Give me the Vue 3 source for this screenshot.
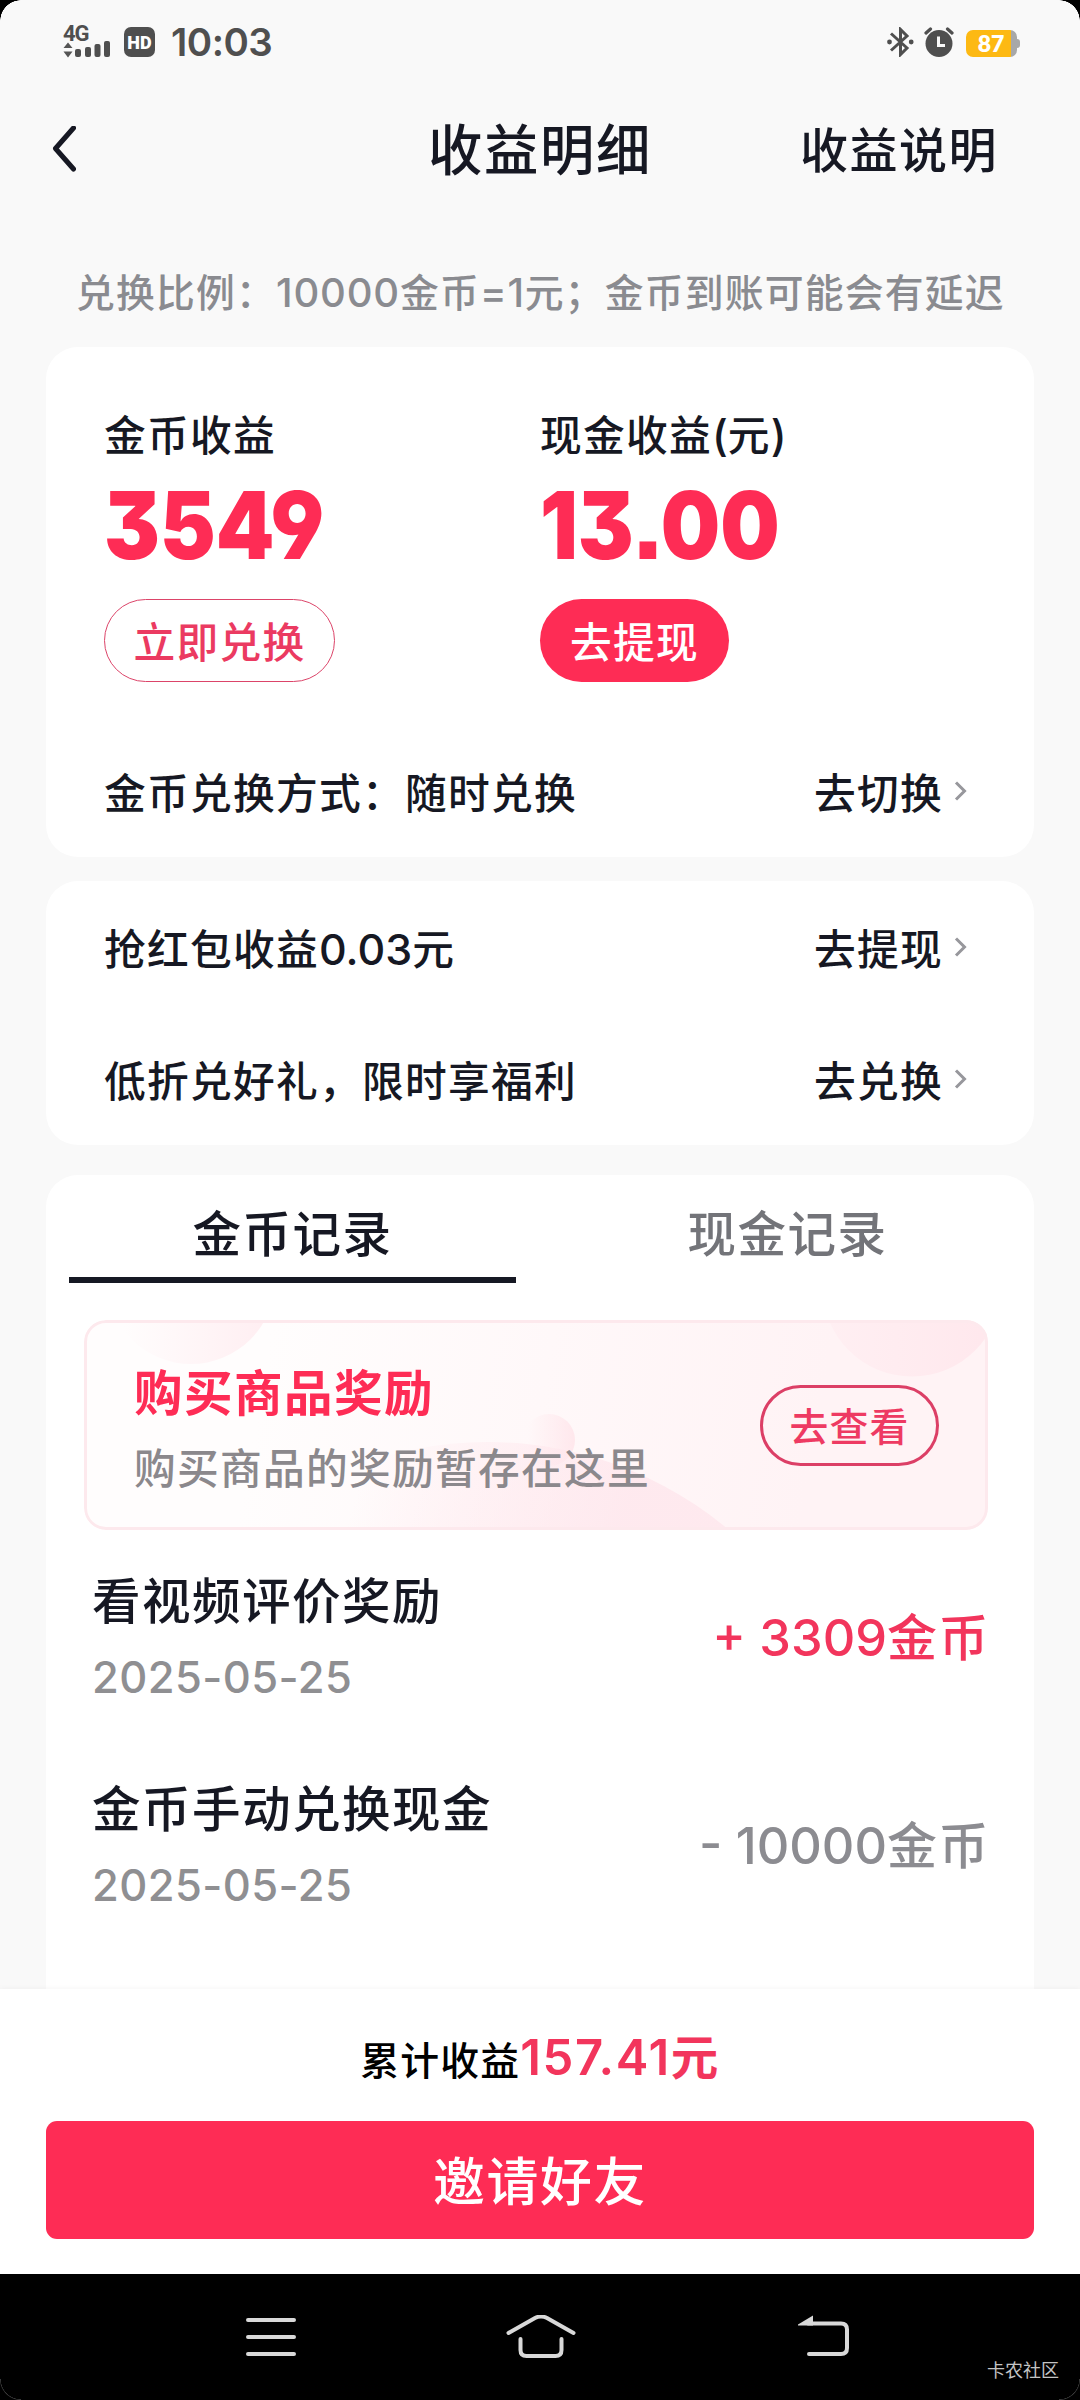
<script setup>
import { h } from 'vue'

const exchangeRows = [
  { label: '抢红包收益0.03元', action: '去提现' },
  { label: '低折兑好礼，限时享福利', action: '去兑换' },
]

const records = [
  { title: '看视频评价奖励', date: '2025-05-25', amount: '+ 3309金币', gain: true },
  { title: '金币手动兑换现金', date: '2025-05-25', amount: '- 10000金币', gain: false },
]

// Splits mixed text into Latin and Han runs so that each gets its own sizing.
const Txt = (props) =>
  h(
    'span',
    { class: 'txt' },
    props.v
      .match(/[\x00-\x7f]+|[^\x00-\x7f]+/g)
      .map((run) => h('span', { class: /^[\x00-\x7f]/.test(run) ? 'lat' : 'han' }, run)),
  )
Txt.props = ['v']
</script>

<template>
  <div class="screen">
    <header class="status">
      <div class="status-left">
        <div class="signal">
          <span class="net">4G</span>
          <svg width="48" height="18" viewBox="0 0 48 18">
            <path d="M5 2.500 9.500 8H.5zM5 17.500.5 11.500H9.500z" fill="#555" />
            <g fill="#4f4f4f">
              <rect x="12" y="9" width="6" height="8" rx="2" />
              <rect x="22" y="7" width="6" height="10" rx="2" />
              <rect x="31.500" y="4" width="6" height="13" rx="2" />
              <rect x="41" y="1" width="6" height="16" rx="2" />
            </g>
          </svg>
        </div>
        <span class="hd">HD</span>
        <span class="clock">10:03</span>
      </div>
      <div class="status-right">
        <svg width="27" height="30" viewBox="0 0 27 30" fill="none" stroke="#4f4f4f" stroke-width="3">
          <path d="M4 6.500 20 21l-6.500 6.500V2.500L20 9 4 23.500" />
          <circle cx="2.500" cy="15" r="2.400" fill="#4f4f4f" stroke="none" />
          <circle cx="24.200" cy="15" r="2.400" fill="#4f4f4f" stroke="none" />
        </svg>
        <svg class="alarm" width="30" height="30" viewBox="0 0 30 30">
          <circle cx="15" cy="16.500" r="13.500" fill="#4f4f4f" />
          <path d="M2 6 6.500 2M28 6 23.500 2" stroke="#4f4f4f" stroke-width="3.200" stroke-linecap="round" />
          <path d="M14.500 9.500v9h6.500" fill="none" stroke="#f9f9f9" stroke-width="3" />
        </svg>
        <div class="battery"><span class="level">87</span></div>
      </div>
    </header>

    <nav class="topbar">
      <svg class="back" width="24" height="46" viewBox="0 0 24 46">
        <path d="M21.500 2 3.500 22.500 21.500 43" fill="none" stroke="#161823" stroke-width="5" stroke-linecap="round" stroke-linejoin="round" />
      </svg>
      <h1><Txt v="收益明细" /></h1>
      <span class="explain"><Txt v="收益说明" /></span>
    </nav>

    <main>
      <p class="ratio"><Txt v="兑换比例：10000金币=1元；金币到账可能会有延迟" /></p>

      <section class="card balance">
        <div class="totals">
          <div class="total">
            <div class="label"><Txt v="金币收益" /></div>
            <div class="number">3549</div>
            <button class="pill outline"><Txt v="立即兑换" /></button>
          </div>
          <div class="total">
            <div class="label"><Txt v="现金收益(元)" /></div>
            <div class="number">13.00</div>
            <button class="pill solid"><Txt v="去提现" /></button>
          </div>
        </div>
        <div class="row mode">
          <Txt v="金币兑换方式：随时兑换" />
          <span class="go">
            <Txt v="去切换" />
            <svg width="13" height="22" viewBox="0 0 13 22"><path d="M2 2.500 10.500 11 2 19.500" fill="none" stroke="#97979c" stroke-width="3" /></svg>
          </span>
        </div>
      </section>

      <section class="card links">
        <div v-for="r in exchangeRows" :key="r.label" class="row">
          <Txt :v="r.label" />
          <span class="go">
            <Txt :v="r.action" />
            <svg width="13" height="22" viewBox="0 0 13 22"><path d="M2 2.500 10.500 11 2 19.500" fill="none" stroke="#97979c" stroke-width="3" /></svg>
          </span>
        </div>
      </section>

      <section class="card history">
        <div class="tabs">
          <div class="tab active"><Txt v="金币记录" /></div>
          <div class="tab"><Txt v="现金记录" /></div>
        </div>

        <div class="banner">
          <svg class="bubbles" viewBox="84 1320 904 210" width="904" height="210">
            <defs>
              <linearGradient id="b1" x1="0" x2="1"><stop offset=".1" stop-color="#ffe3e9" stop-opacity="0" /><stop offset="1" stop-color="#ffe3e9" stop-opacity=".6" /></linearGradient>
              <linearGradient id="b2" x1="0" x2="1"><stop offset="0" stop-color="#ffe6ec" stop-opacity=".3" /><stop offset="1" stop-color="#ffe4ea" stop-opacity=".8" /></linearGradient>
              <linearGradient id="b3" gradientUnits="userSpaceOnUse" x1="370" x2="620" y1="1450" y2="1530"><stop offset="0" stop-color="#ffe4ea" stop-opacity="0" /><stop offset="1" stop-color="#fee7ed" stop-opacity=".85" /></linearGradient>
              <linearGradient id="b4" x1="0" x2="1" y1="0" y2="0"><stop offset=".1" stop-color="#ffdfe6" stop-opacity="0" /><stop offset="1" stop-color="#ffdfe6" stop-opacity=".65" /></linearGradient>
            </defs>
            <circle cx="191" cy="1280" r="84" fill="url(#b1)" />
            <circle cx="912" cy="1287" r="89.500" fill="url(#b2)" />
            <circle cx="549" cy="1440" r="26" fill="url(#b4)" />
            <circle cx="488" cy="1816" r="374" fill="url(#b3)" />
          </svg>
          <div class="promo">
            <div class="promo-title"><Txt v="购买商品奖励" /></div>
            <div class="promo-sub"><Txt v="购买商品的奖励暂存在这里" /></div>
          </div>
          <button class="view"><Txt v="去查看" /></button>
        </div>

        <div v-for="r in records" :key="r.title" class="record">
          <div>
            <div class="record-title"><Txt :v="r.title" /></div>
            <div class="date">{{ r.date }}</div>
          </div>
          <div class="amount" :class="{ gain: r.gain }"><Txt :v="r.amount" /></div>
        </div>
      </section>
    </main>

    <footer class="bottom">
      <div class="sum"><Txt v="累计收益" /><span class="sum-value"><Txt v="157.41元" /></span></div>
      <button class="invite"><Txt v="邀请好友" /></button>
    </footer>

    <div class="sysnav">
      <svg width="50" height="44" viewBox="0 0 50 44" stroke="#d9d9d9" stroke-width="4" stroke-linecap="round">
        <path d="M2 5h46M2 22h46M2 39h46" />
      </svg>
      <svg class="home" width="70" height="44" viewBox="0 0 70 44" fill="none" stroke="#d9d9d9" stroke-width="4" stroke-linecap="round">
        <path d="M2.500 18 29 3q6-3 12 0l26.500 15" />
        <path d="M14.500 24v11q0 6 6 6h29q6 0 6-6V24" />
      </svg>
      <svg class="return" width="52" height="44" viewBox="0 0 52 44" fill="none" stroke="#d9d9d9" stroke-width="4">
        <path d="M10 8.500h33q6 0 6 6V33q0 6-6 6H11" stroke-linecap="round" />
        <path d="M0 9.500 15 .5v10H0z" fill="#d9d9d9" stroke="none" />
      </svg>
      <span class="watermark">卡农社区</span>
    </div>
    <i class="corner tl"></i><i class="corner tr"></i>
    <i class="corner bl"></i><i class="corner br"></i>
  </div>
</template>

<style>
body {
  margin: 0;
  background: #000;
}
.txt {
  white-space: pre;
}
.han {
  font-size: 0.97em;
  letter-spacing: 0.031em;
}
.ratio .lat {
  letter-spacing: 0.8px;
}
.amount .lat {
  font-size: 0.98em;
}
.sum-value .lat {
  letter-spacing: 1.6px;
}
</style>

<style scoped>
.screen {
  position: relative;
  width: 1080px;
  height: 2400px;
  overflow: hidden;
  display: flex;
  flex-direction: column;
  background: #f9f9f9;
  color: #161823;
  font-family: Inter, 'Noto Sans CJK SC', sans-serif;
  font-weight: 500;
  font-size: 43px;
}
button {
  font: inherit;
  padding: 0;
  margin: 0;
  border: 0;
  background: none;
  box-sizing: border-box;
  display: flex;
  align-items: center;
  justify-content: center;
}
h1,
p {
  margin: 0;
  font-weight: inherit;
}
.status {
  height: 84px;
  flex: none;
  display: flex;
  justify-content: space-between;
  box-sizing: border-box;
  padding: 0 60px 0 63px;
  color: #4f4f4f;
}
.status-left,
.status-right {
  display: flex;
  height: 84px;
  align-items: center;
}
.signal {
  display: flex;
  flex-direction: column;
  height: 36px;
  width: 48px;
  margin-top: 2px;
}
.net {
  font: 700 22px/18px Roboto, sans-serif;
  height: 18px;
  letter-spacing: -1px;
}
.signal svg {
  flex: none;
  margin-top: -3px;
}
.hd {
  width: 31px;
  height: 30px;
  margin-left: 13px;
  border-radius: 7px;
  background: #4f4f4f;
  color: #fff;
  font: 900 18px/31px Roboto, sans-serif;
  text-align: center;
}
.clock {
  margin-left: 16px;
  font: 600 38.500px/56px Inter, sans-serif;
  letter-spacing: -0.5px;
}
.alarm {
  margin-left: 10px;
}
.battery {
  position: relative;
  margin: 2px 3px 0 12px;
  width: 51px;
  height: 27px;
  border-radius: 7px;
  background: linear-gradient(90deg, #fdb913 45px, #a8a8a8 45px);
  color: #fff;
}
.battery::after {
  content: '';
  position: absolute;
  left: 51px;
  top: 9px;
  width: 3px;
  height: 9px;
  border-radius: 0 3px 3px 0;
  background: #a8a8a8;
}
.level {
  display: block;
  width: 50px;
  text-align: center;
  font: 800 23px/27px Lato, sans-serif;
}
.topbar {
  flex: none;
  height: 130px;
  display: grid;
  grid-template-columns: 380px 320px 380px;
  align-items: center;
}
.back {
  margin-left: 52px;
}
h1 {
  text-align: center;
  font-size: 56px;
  padding-bottom: 5px;
}
.explain {
  justify-self: end;
  margin-right: 82px;
  padding-bottom: 4px;
  font-size: 49.500px;
}
main {
  flex: 1;
  min-height: 0;
  overflow: hidden;
  padding: 0 46px;
}
.ratio {
  height: 133px;
  box-sizing: border-box;
  padding: 49px 0 0 30px;
  line-height: 60px;
  font-size: 40px;
  color: #8a8b90;
  white-space: nowrap;
}
.card {
  background: #fff;
  border-radius: 32px;
  box-sizing: border-box;
}
.balance {
  height: 510px;
  padding: 58px 67px 0 58px;
}
.totals {
  display: grid;
  grid-template-columns: 436px 1fr;
}
.total {
  display: flex;
  flex-direction: column;
  align-items: flex-start;
}
.label {
  height: 60px;
  line-height: 60px;
}
.number {
  height: 100px;
  margin: 10px 0 24px;
  line-height: 100px;
  font-size: 93.500px;
  font-weight: 900;
  color: #fe2c55;
  transform: scaleX(0.895);
  transform-origin: 0 50%;
  font-feature-settings: 'cv09', 'cv04', 'ss07';
}
.pill {
  height: 83px;
  border-radius: 42px;
  padding: 0 31px 1px;
}
.outline {
  border: 1.500px solid #dc4469;
  color: #eb3a61;
  width: 231px;
}
.solid {
  background: #fe2c55;
  color: #fff;
  width: 189px;
}
.row {
  display: flex;
  align-items: center;
  justify-content: space-between;
  height: 132px;
}
.mode {
  margin-top: 43px;
}
.go {
  display: flex;
  align-items: center;
  gap: 11px;
}
.links {
  margin-top: 24px;
  height: 264px;
  padding: 0 67px 0 58px;
}
.history {
  margin-top: 30px;
  height: 860px;
  padding: 0 23px;
}
.tabs {
  display: flex;
  gap: 48px;
  height: 108px;
}
.tab {
  flex: 1;
  box-sizing: border-box;
  text-align: center;
  line-height: 118px;
  height: 108px;
  font-size: 50px;
  color: #737479;
}
.active {
  color: #161823;
  border-bottom: 6px solid #161823;
}
.banner {
  position: relative;
  margin: 37px 0 0 15px;
  width: 904px;
  height: 210px;
  box-sizing: border-box;
  border-radius: 22px;
  overflow: hidden;
  display: flex;
  justify-content: space-between;
  padding: 40px 49px 0 50px;
  background: linear-gradient(100deg, #fffdfd 20%, #fff3f5 80%);
}
.banner::after {
  content: '';
  position: absolute;
  inset: 0;
  border: 3px solid #fde9ed;
  border-radius: 22px;
}
.bubbles {
  position: absolute;
  left: 0;
  top: 0;
}
.promo,
.view {
  position: relative;
}
.promo-title {
  line-height: 66px;
  font-size: 50px;
  font-weight: 700;
  color: #fe2c55;
}
.promo-sub {
  margin-top: 10px;
  line-height: 62px;
  color: #8b888c;
}
.view {
  margin-top: 25px;
  width: 179px;
  height: 81px;
  padding-bottom: 4px;
  border: 3px solid #dc3f66;
  border-radius: 41px;
  font-size: 40px;
  color: #ee3a62;
}
.record {
  height: 208px;
  display: flex;
  justify-content: space-between;
  align-items: center;
  padding: 7px 21px 0 23px;
  box-sizing: border-box;
}
.record-title {
  font-size: 50px;
  line-height: 70px;
}
.date {
  margin-top: 8px;
  line-height: 64px;
  font-size: 43.500px;
  letter-spacing: 0.4px;
  color: #8f8f92;
}
.amount {
  padding-bottom: 7px;
  font-size: 51.500px;
  color: #8c8c91;
}
.gain {
  color: #f2355c;
}
.bottom {
  flex: none;
  height: 285px;
  box-sizing: border-box;
  padding: 34px 46px 0;
  background: #fff;
  box-shadow: 0 0 6px rgba(0, 0, 0, 0.05);
}
.sum {
  height: 70px;
  margin-bottom: 28px;
  line-height: 70px;
  text-align: center;
  font-size: 40px;
  color: #000;
}
.sum-value {
  font-size: 49px;
  font-weight: 600;
  color: #f2355c;
}
.invite {
  width: 100%;
  height: 118px;
  padding-bottom: 3px;
  border-radius: 11px;
  background: #fe2c55;
  color: #fff;
  font-size: 53.500px;
}
.sysnav {
  position: relative;
  flex: none;
  height: 126px;
  box-sizing: border-box;
  padding: 41px 0 0 246px;
  background: #000;
  display: flex;
  align-items: flex-start;
}
.home {
  margin-left: 210px;
}
.return {
  margin-left: 222px;
}
.watermark {
  position: absolute;
  right: 21px;
  bottom: 18px;
  font: 400 18px/26px 'Noto Sans CJK SC', sans-serif;
  color: #c4c4c4;
}
.corner {
  position: absolute;
  width: 21px;
  height: 21px;
}
.tl {
  left: 0;
  top: 0;
  background: radial-gradient(circle at 100% 100%, transparent 20.500px, #000 21px);
}
.tr {
  right: 0;
  top: 0;
  background: radial-gradient(circle at 0 100%, transparent 20.500px, #000 21px);
}
.bl {
  left: 0;
  bottom: 0;
  background: radial-gradient(circle at 100% 0, transparent 20px, #3a3a3a 20.500px, transparent 21.500px);
}
.br {
  right: 0;
  bottom: 0;
  background: radial-gradient(circle at 0 0, transparent 20px, #3a3a3a 20.500px, transparent 21.500px);
}
</style>
